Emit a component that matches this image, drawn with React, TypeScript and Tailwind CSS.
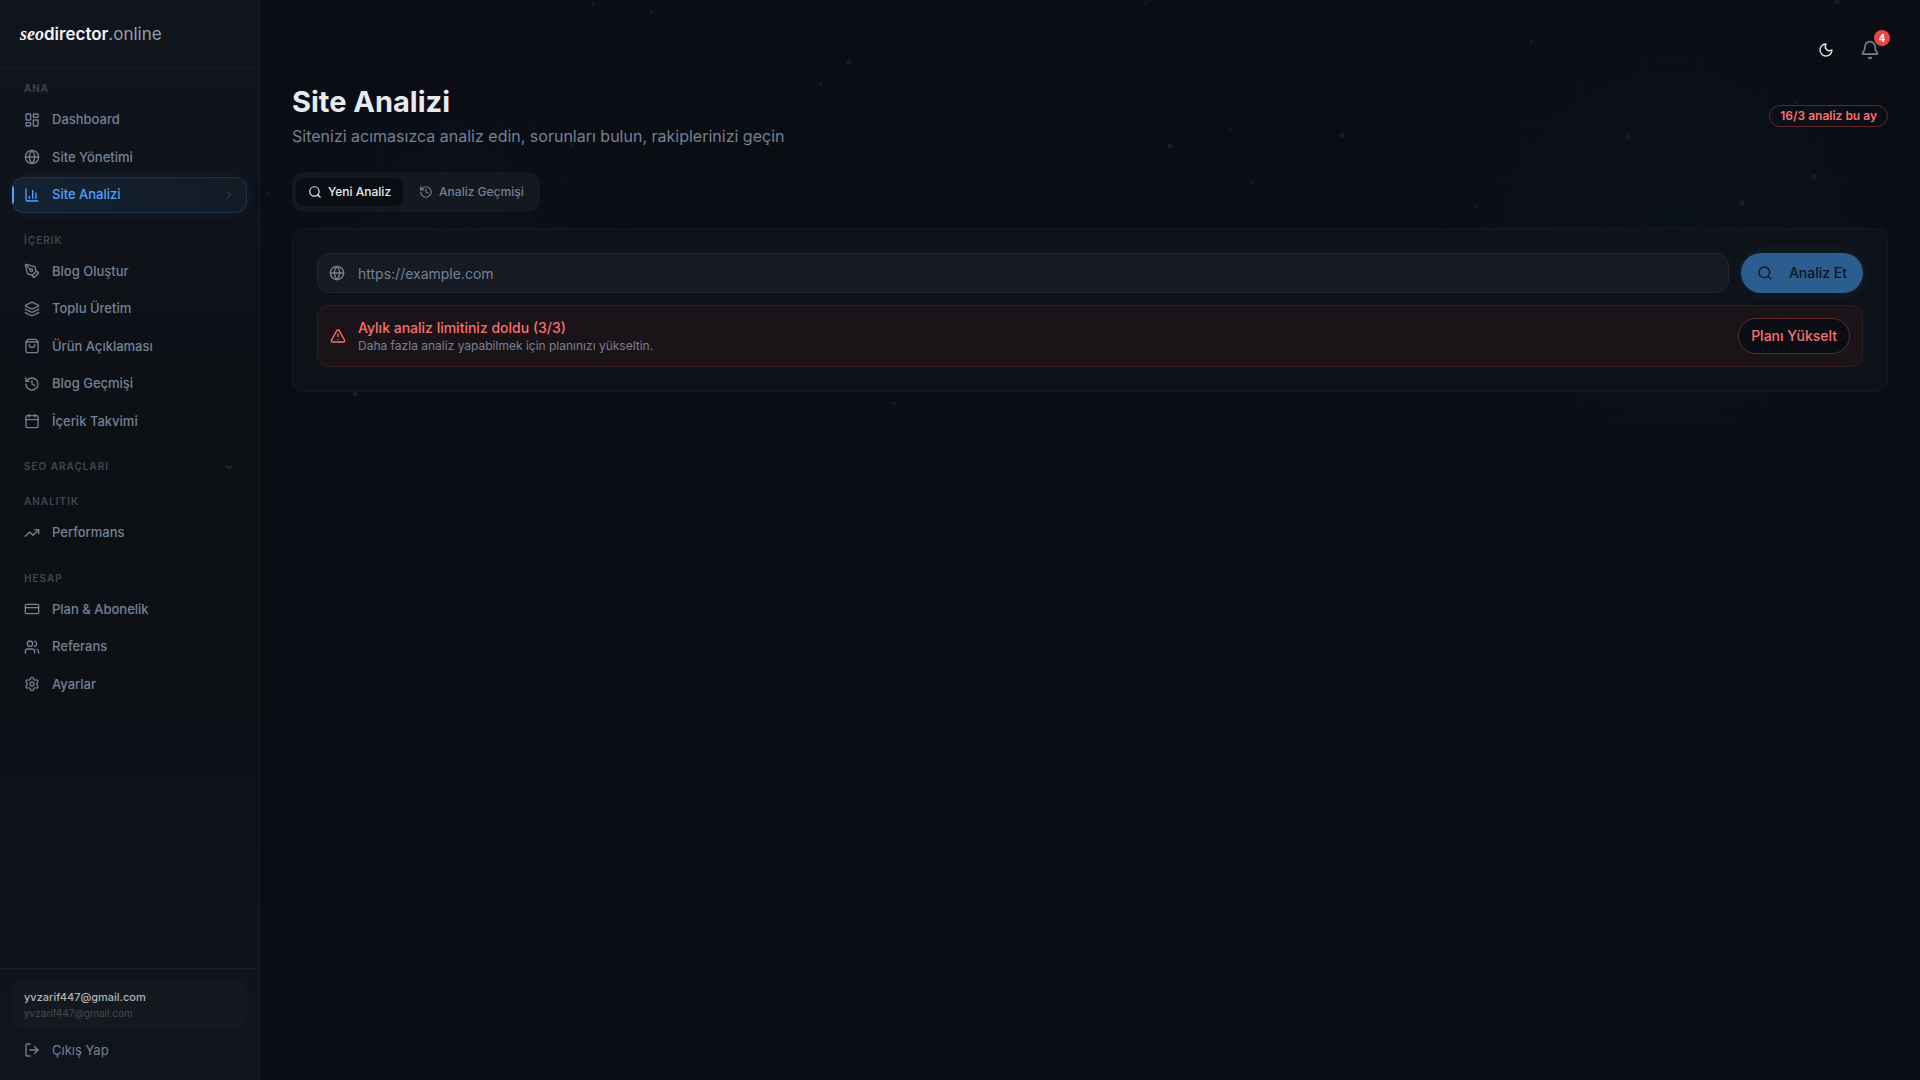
import { useState } from 'react'
import {
  Bell,
  Calendar,
  ChartColumn,
  ChevronDown,
  ChevronRight,
  CreditCard,
  Globe,
  History,
  Layers,
  LayoutDashboard,
  LogOut,
  Moon,
  PenTool,
  Search,
  Settings,
  ShoppingBag,
  TrendingUp,
  TriangleAlert,
  Users,
  type LucideIcon,
} from 'lucide-react'

interface NavItem {
  label: string
  icon: LucideIcon
}

interface NavGroup {
  title: string
  collapsed?: boolean
  items: NavItem[]
}

const navGroups: NavGroup[] = [
  {
    title: 'ANA',
    items: [
      { label: 'Dashboard', icon: LayoutDashboard },
      { label: 'Site Yönetimi', icon: Globe },
      { label: 'Site Analizi', icon: ChartColumn },
    ],
  },
  {
    title: 'İÇERIK',
    items: [
      { label: 'Blog Oluştur', icon: PenTool },
      { label: 'Toplu Üretim', icon: Layers },
      { label: 'Ürün Açıklaması', icon: ShoppingBag },
      { label: 'Blog Geçmişi', icon: History },
      { label: 'İçerik Takvimi', icon: Calendar },
    ],
  },
  { title: 'SEO ARAÇLARI', collapsed: true, items: [] },
  { title: 'ANALITIK', items: [{ label: 'Performans', icon: TrendingUp }] },
  {
    title: 'HESAP',
    items: [
      { label: 'Plan & Abonelik', icon: CreditCard },
      { label: 'Referans', icon: Users },
      { label: 'Ayarlar', icon: Settings },
    ],
  },
]

const particles = [
  [8, 193, 1], [95, 394, 2], [274, 128, 1], [312, 145, 1], [333, 4, 1], [391, 12, 1],
  [561, 84, 1], [589, 62, 2], [634, 403, 1], [886, 3, 1], [910, 146, 2], [970, 129, 1],
  [991, 183, 1], [1082, 135, 2], [1216, 206, 1], [1271, 42, 1], [1368, 137, 2],
  [1482, 203, 2], [1536, 102, 1], [1554, 177, 2], [1577, 2, 2],
]

function Backdrop() {
  return (
    <div className="pointer-events-none absolute inset-0 overflow-hidden" aria-hidden="true">
      <div className="absolute inset-x-0 top-0 h-[421px] bg-[linear-gradient(to_right,rgba(255,255,255,0.006)_1px,transparent_1px),linear-gradient(to_bottom,rgba(255,255,255,0.006)_1px,transparent_1px)] bg-[size:60px_60px]" />
      <div className="absolute inset-0 bg-[radial-gradient(circle_240px_at_1412px_245px,rgba(40,110,180,0.05),transparent),radial-gradient(circle_200px_at_190px_230px,rgba(40,90,180,0.03),transparent)]" />
      <svg className="absolute inset-0 h-full w-full">
        {particles.map(([x, y, r]) => (
          <circle key={`${x}-${y}`} cx={x} cy={y} r={r + 0.5} fill="#18233b" opacity={0.7} />
        ))}
      </svg>
    </div>
  )
}

function NavLink({ item, active, onSelect }: { item: NavItem; active: boolean; onSelect: () => void }) {
  const Icon = item.icon
  return (
    <a
      href="#"
      onClick={onSelect}
      className={`relative flex items-center gap-3 rounded-xl px-3 py-2 text-[13px] font-medium ${
        active
          ? 'bg-linear-to-r from-[#132333] to-[#131b24] text-[#4da3ff] shadow-[0_0_16px_rgba(77,163,255,0.08)] ring-1 ring-inset ring-[#1a3550]'
          : 'text-[#748196]'
      }`}
    >
      {active && <span className="absolute left-0 top-1/2 h-[18px] w-0.5 -translate-y-1/2 rounded-r bg-[#4da3ff]" />}
      <Icon className="size-4 shrink-0" />
      <span className="flex-1">{item.label}</span>
      {active && <ChevronRight className="size-3 text-[#28557f]" />}
    </a>
  )
}

function Sidebar() {
  const [active, setActive] = useState('Site Analizi')

  return (
    <aside className="sticky top-0 flex h-screen w-[260px] shrink-0 flex-col border-r border-[#171b22] bg-linear-to-b from-[#10141d] via-[#0c1014] to-[#10141d]">
      <div className="flex h-[69px] shrink-0 items-center border-b border-[#171c24] px-5">
        <a href="#" className="text-[17px] text-[#9b9ea4]">
          <span className="font-['Liberation_Serif',serif] text-[18px] font-semibold italic text-[#f2f4f7]">seo</span>
          <span className="font-semibold text-[#f2f4f7]">director</span>
          <span>.online</span>
        </a>
      </div>

      <nav className="flex flex-1 flex-col gap-5 overflow-hidden px-3 py-3">
        {navGroups.map((group) =>
          group.collapsed ? (
            <button key={group.title} className="flex items-center justify-between px-3 text-[10px] font-semibold tracking-widest text-[#3f4854]">
              {group.title}
              <ChevronDown className="size-3" />
            </button>
          ) : (
            <div key={group.title}>
              <p className="mb-1.5 px-3 text-[10px] font-semibold tracking-widest text-[#3f4854]">{group.title}</p>
              <div className="space-y-0.5">
                {group.items.map((item) => (
                  <NavLink key={item.label} item={item} active={item.label === active} onSelect={() => setActive(item.label)} />
                ))}
              </div>
            </div>
          ),
        )}
      </nav>

      <div className="space-y-1 border-t border-[#171c24] p-3">
        <div className="rounded-xl bg-[#14181f] px-3 py-2">
          <p className="text-[11px] font-medium text-[#b0b4ba]">yvzarif447@gmail.com</p>
          <p className="text-[10px] text-[#444b57]">yvzarif447@gmail.com</p>
        </div>
        <button className="flex w-full items-center gap-3 px-3 py-2 text-[13px] text-[#748196]">
          <LogOut className="size-4" />
          Çıkış Yap
        </button>
      </div>
    </aside>
  )
}

export default function App() {
  const [tab, setTab] = useState('new')
  const [url, setUrl] = useState('')

  const tabs = [
    { id: 'new', label: 'Yeni Analiz', icon: Search },
    { id: 'history', label: 'Analiz Geçmişi', icon: History },
  ]

  return (
    <div className="flex min-h-screen bg-[#0a0d14] font-['Inter',sans-serif] text-[#e8eaf0]">
      <Sidebar />

      <main className="relative min-w-0 flex-1">
        <Backdrop />
        <div className="relative p-8">
          <div className="mb-4 flex justify-end gap-2">
            <button aria-label="Tema" className="flex size-9 items-center justify-center">
              <Moon className="size-4" />
            </button>
            <button aria-label="Bildirimler" className="relative flex size-9 items-center justify-center text-[#748196]">
              <Bell className="size-5" />
              <span className="absolute -right-0.5 -top-0.5 flex size-4 items-center justify-center rounded-full bg-[#ef4444] text-[10px] font-bold text-white">
                4
              </span>
            </button>
          </div>

          <div className="mb-6 flex items-center justify-between">
            <div>
              <h1 className="text-[29px] font-bold leading-9">Site Analizi</h1>
              <p className="mt-1 text-base text-[#748196]">Sitenizi acımasızca analiz edin, sorunları bulun, rakiplerinizi geçin</p>
            </div>
            <span className="rounded-full border border-[#5c2a30] px-2.5 py-0.5 text-xs font-semibold text-[#f87171]">16/3 analiz bu ay</span>
          </div>

          <div role="tablist" className="mb-4 inline-flex h-10 items-center gap-1 rounded-xl bg-[#141820] px-1">
            {tabs.map(({ id, label, icon: Icon }) => (
              <button
                key={id}
                role="tab"
                aria-selected={tab === id}
                onClick={() => setTab(id)}
                className={`flex items-center gap-1.5 rounded-lg px-3 py-1.5 text-xs font-medium ${
                  tab === id ? 'bg-[#0a0d14] text-[#e8eaf0]' : 'text-[#748196]'
                }`}
              >
                <Icon className="size-3.5" />
                {label}
              </button>
            ))}
          </div>

          <section className="space-y-3 rounded-xl border border-[#151a22] bg-[#0e1219] p-6">
            <form className="flex gap-3" onSubmit={(e) => e.preventDefault()}>
              <div className="relative flex-1">
                <Globe className="absolute left-3 top-3 size-4 text-[#748196]" />
                <input
                  type="url"
                  aria-label="Site adresi"
                  placeholder="https://example.com"
                  value={url}
                  onChange={(e) => setUrl(e.target.value)}
                  className="h-10 w-full rounded-xl border border-[#20252e] bg-[#161a22] pl-10 pr-3 text-sm outline-none placeholder:text-[#748196]"
                />
              </div>
              <button
                type="submit"
                className="flex h-10 items-center gap-4 rounded-full bg-[#2c5d8f] px-4 text-sm font-medium text-[#0b1420] shadow-[0_0_16px_rgba(77,163,255,0.1)]"
              >
                <Search className="size-4" />
                Analiz Et
              </button>
            </form>

            <div className="flex items-center gap-3 rounded-xl border border-[#321a20] bg-[#1a1419] p-3 text-[#f87171]">
              <TriangleAlert className="size-4 shrink-0" />
              <div className="flex-1">
                <p className="text-sm font-medium">Aylık analiz limitiniz doldu (3/3)</p>
                <p className="text-xs text-[#748196]">Daha fazla analiz yapabilmek için planınızı yükseltin.</p>
              </div>
              <button className="h-9 rounded-full border border-[#5c2a30] bg-[#0a0d14] px-3 text-sm font-medium">Planı Yükselt</button>
            </div>
          </section>
        </div>
      </main>
    </div>
  )
}
